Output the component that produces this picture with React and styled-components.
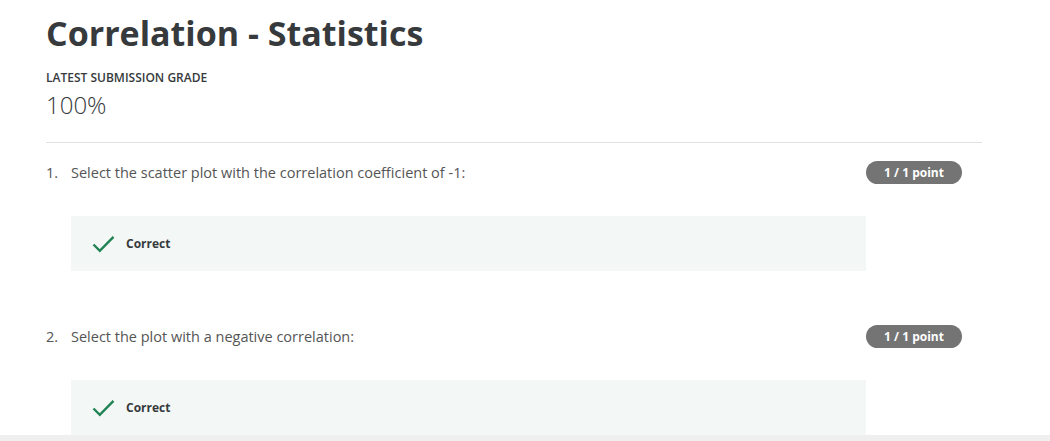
import React from "react";
import styled, { createGlobalStyle } from "styled-components";

const GlobalStyle = createGlobalStyle`
  html, body {
    margin: 0;
    padding: 0;
    background: #fff;
    font-family: "Open Sans", "Noto Sans", sans-serif;
    overflow: hidden;
  }
`;

const Page = styled.div`
  padding: 10px 68px 0 46px;
  height: 441px;
  box-sizing: border-box;
`;

const Title = styled.h1`
  margin: 0;
  font-size: 34px;
  line-height: 46px;
  font-weight: 700;
  color: #373a3c;
`;

const Label = styled.div`
  margin-top: 14px;
  font-size: 12px;
  line-height: 16px;
  font-weight: 600;
  color: #373a3c;
  text-transform: uppercase;
`;

const Grade = styled.div`
  margin-top: 3px;
  font-size: 24px;
  line-height: 32px;
  font-weight: 300;
  color: #373a3c;
`;

const Divider = styled.hr`
  margin: 21px 0 0;
  border: 0;
  border-top: 1px solid #e1e1e1;
`;

const Question = styled.section`
  margin-top: ${(p) => (p.first ? "18px" : "54px")};
`;

const QuestionRow = styled.div`
  display: flex;
  align-items: center;
  height: 23px;
`;

const Number = styled.span`
  width: 25px;
  font-size: 14.5px;
  color: #555;
`;

const Prompt = styled.span`
  flex: 1;
  font-size: 14.5px;
  color: #555;
`;

const Badge = styled.span`
  width: 96px;
  height: 23px;
  margin-right: 20px;
  border-radius: 12px;
  background: #747474;
  color: #fff;
  font-size: 12px;
  font-weight: 700;
  display: flex;
  align-items: center;
  justify-content: center;
`;

const Feedback = styled.div`
  margin: 32px 116px 0 25px;
  height: 55px;
  background: #f3f8f6;
  display: flex;
  align-items: center;
  padding-left: 21px;
  gap: 11px;
`;

const FeedbackText = styled.span`
  font-size: 12px;
  font-weight: 700;
  color: #373a3c;
`;

const Footer = styled.div`
  position: fixed;
  left: 0;
  right: 0;
  bottom: 0;
  height: 6px;
  background: #efefef;
`;

const Check = () => (
  <svg width="23" height="18" viewBox="0 0 23 18" fill="none">
    <path d="M1.5 9.5 L7.8 15.8 L21.5 1.8" stroke="#1f8354" strokeWidth="2.4" />
  </svg>
);

const questions = [
  "Select the scatter plot with the correlation coefficient of -1:",
  "Select the plot with a negative correlation:",
];

export default function App() {
  return (
    <>
      <GlobalStyle />
      <Page>
        <Title>Correlation - Statistics</Title>
        <Label>Latest Submission Grade</Label>
        <Grade>100%</Grade>
        <Divider />
        {questions.map((q, i) => (
          <Question key={i} first={i === 0}>
            <QuestionRow>
              <Number>{i + 1}.</Number>
              <Prompt>{q}</Prompt>
              <Badge>1 / 1 point</Badge>
            </QuestionRow>
            <Feedback>
              <Check />
              <FeedbackText>Correct</FeedbackText>
            </Feedback>
          </Question>
        ))}
      </Page>
      <Footer />
    </>
  );
}
